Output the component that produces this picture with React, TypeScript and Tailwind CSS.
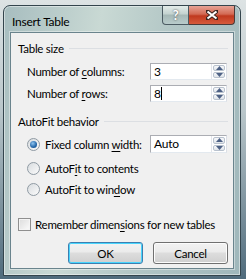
const Spin = () => (
  <div className="flex flex-col w-[15px] h-full border-l border-[#e3e6ec] gap-px p-px">
    <div className="flex-1 flex items-center justify-center rounded-[2px] border border-[#b9c2ce] bg-gradient-to-b from-[#f8f9fb] to-[#dfe4ea]">
      <svg width="7" height="4" viewBox="0 0 7 4">
        <path d="M0 4 L3.5 0 L7 4 Z" fill="#4d6185" />
      </svg>
    </div>
    <div className="flex-1 flex items-center justify-center rounded-[2px] border border-[#b9c2ce] bg-gradient-to-b from-[#f8f9fb] to-[#dfe4ea]">
      <svg width="7" height="4" viewBox="0 0 7 4">
        <path d="M0 0 L7 0 L3.5 4 Z" fill="#4d6185" />
      </svg>
    </div>
  </div>
);

type SpinBoxProps = {
  value: string;
  caret?: boolean;
  tall?: boolean;
};

const SpinBox = ({ value, caret, tall }: SpinBoxProps) => (
  <div
    className={`flex shrink-0 w-[77px] ${tall ? 'h-[18px]' : 'h-[17px]'} border border-[#abadb3] border-b-[#e3e9ef] border-r-[#dbdfe6] bg-white`}
  >
    <div className="flex-1 flex items-center pl-[3px] leading-none text-[12px]">
      {value}
      {caret && <span className="inline-block w-px h-[13px] bg-black" />}
    </div>
    <Spin />
  </div>
);

const GroupHeader = ({ title }: { title: string }) => (
  <div className="flex items-center h-[16px] gap-[5px]">
    <span>{title}</span>
    <div className="flex-1 h-px bg-[#dcdfe3] mr-[5px]" />
  </div>
);

const Radio = ({ checked }: { checked?: boolean }) => (
  <div className="w-[13px] h-[13px] shrink-0 rounded-full border border-[#8f9aa3] bg-gradient-to-br from-[#d8dcdf] to-[#fbfbfb] flex items-center justify-center">
    {checked && (
      <div className="w-[7px] h-[7px] rounded-full bg-[radial-gradient(circle_at_40%_35%,#8fc4ef,#2265a8_60%,#1a4f86)]" />
    )}
  </div>
);

const RadioRow = ({
  checked,
  children,
}: {
  checked?: boolean;
  children: React.ReactNode;
}) => (
  <div className="flex items-center gap-[5px] pl-[9px]">
    <Radio checked={checked} />
    <span>{children}</span>
  </div>
);

const Btn = ({ label, primary }: { label: string; primary?: boolean }) => (
  <div
    className={`w-[75px] h-[22px] rounded-[3px] flex items-center justify-center border ${
      primary ? 'border-[#3c7fb1] shadow-[inset_0_0_0_1px_#48d5fd]' : 'border-[#707070] shadow-[inset_0_0_0_1px_#fcfcfc]'
    } bg-[linear-gradient(#f2f2f2_0%,#ebebeb_45%,#dddddd_50%,#cfcfcf_100%)]`}
  >
    {label}
  </div>
);

const U = ({ children }: { children: React.ReactNode }) => (
  <span className="underline underline-offset-2">{children}</span>
);

const App = () => {
  return (
    <div
      className="w-[246px] h-[279px] pt-[5px] pl-[3px] overflow-hidden bg-[linear-gradient(#dde3e4_0%,#b9c6ca_40%,#4f6b7c_100%)] text-[11.5px] leading-[15px] tracking-[-0.25px] whitespace-nowrap text-black"
      style={{ fontFamily: 'Lato, "Liberation Sans", sans-serif' }}
    >
      <div className="w-[238px] h-[271px] rounded-t-[7px] border border-[#34454d] bg-[linear-gradient(100deg,#a7bdbf_0%,#c9d9d4_35%,#b3c7c6_60%,#9fb7bb_100%)] px-[6px] flex flex-col shadow-[inset_0_0_0_1px_rgba(255,255,255,0.45)]">
        <div className="flex h-[26px] items-start">
          <div className="pt-[8px] pl-[2px] text-[12px]">Insert Table</div>
          <div className="ml-auto flex mr-[-1px]">
            <div className="w-[27px] h-[19px] rounded-bl-[4px] border border-t-0 border-[#4b5b62] bg-[linear-gradient(#e3ece9_0%,#c3d2cf_45%,#a5b8b6_50%,#b9cccb_100%)] flex items-center justify-center text-white font-bold text-[13px] [text-shadow:0_0_2px_#333]">
              ?
            </div>
            <div className="w-[46px] h-[19px] rounded-br-[4px] border border-t-0 border-l-0 border-[#4b3a38] bg-[linear-gradient(#e6a396_0%,#d36a54_45%,#c0391f_55%,#d65b3c_100%)] flex items-center justify-center">
              <svg width="12" height="10" viewBox="0 0 12 10">
                <path d="M1 1 L11 9 M11 1 L1 9" stroke="#3a2520" strokeWidth="4" strokeLinecap="square" />
                <path d="M1.5 1.5 L10.5 8.5 M10.5 1.5 L1.5 8.5" stroke="#fff" strokeWidth="2.2" />
              </svg>
            </div>
          </div>
        </div>
        <div className="flex-1 mb-[6px] border border-[#6a848d] bg-[#f0f0f0] flex flex-col pl-[7px] pt-[7px] shadow-[0_0_0_1px_rgba(255,255,255,0.4)]">
          <GroupHeader title="Table size" />
          <div className="flex items-center justify-between mt-[7px] pl-[9px] pr-[6px]">
            <span>
              Number of <U>c</U>olumns:
            </span>
            <SpinBox value="3" />
          </div>
          <div className="flex items-center justify-between mt-[5px] pl-[9px] pr-[6px]">
            <span>
              Number of <U>r</U>ows:
            </span>
            <SpinBox value="8" caret />
          </div>
          <div className="mt-[11px]">
            <GroupHeader title="AutoFit behavior" />
          </div>
          <div className="flex items-center justify-between mt-[6px] pr-[6px]">
            <RadioRow checked>
              Fixed column <U>w</U>idth:
            </RadioRow>
            <SpinBox value="Auto" tall />
          </div>
          <div className="mt-[7px] h-[16px] flex items-center">
            <RadioRow>
              AutoF<U>i</U>t to contents
            </RadioRow>
          </div>
          <div className="mt-[5px] h-[16px] flex items-center">
            <RadioRow>
              AutoFit to win<U>d</U>ow
            </RadioRow>
          </div>
          <div className="mt-[19px] h-[16px] flex items-center gap-[4px]">
            <div className="w-[13px] h-[13px] shrink-0 border border-[#8f8f8f] bg-gradient-to-br from-[#dcdcdc] to-[#fbfbfb] shadow-[inset_0_0_0_1px_#f4f4f4]" />
            <span>
              Remember dimen<U>s</U>ions for new tables
            </span>
          </div>
          <div className="mt-[10px] flex justify-end gap-[10px] pr-[5px]">
            <Btn label="OK" primary />
            <Btn label="Cancel" />
          </div>
        </div>
      </div>
    </div>
  );
};

export default App;
